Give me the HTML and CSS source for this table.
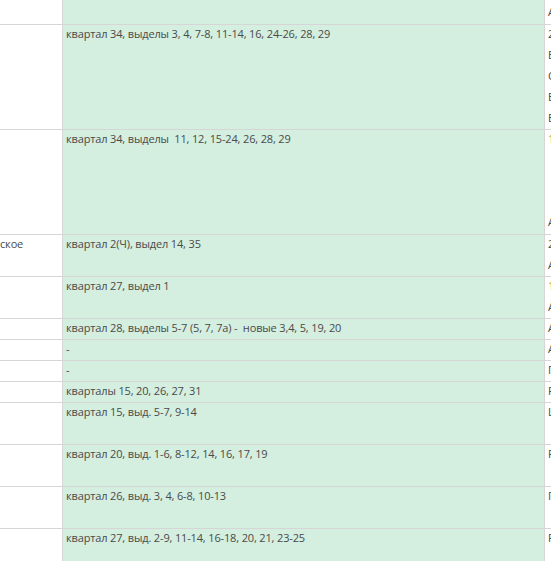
FILE: index.html
```html
<!DOCTYPE html>
<html lang="ru">
<head>
<meta charset="utf-8">
<link rel="stylesheet" href="styles.css">
</head>
<body>
<div class="sheet">
  <div class="row h25">
    <div class="c1"></div>
    <div class="c2"></div>
    <div class="c3 top1">А</div>
  </div>
  <div class="row h105">
    <div class="c1"></div>
    <div class="c2">квартал 34, выделы 3, 4, 7-8, 11-14, 16, 24-26, 28, 29</div>
    <div class="c3"><div class="ln">2</div><div class="ln">Е</div><div class="ln">С</div><div class="ln">Е</div><div class="ln">Е</div></div>
  </div>
  <div class="row h105">
    <div class="c1"></div>
    <div class="c2">квартал 34, выделы &nbsp;11, 12, 15-24, 26, 28, 29</div>
    <div class="c3 split"><div class="ln warn">1</div><div class="ln">А</div></div>
  </div>
  <div class="row h42">
    <div class="c1 clip">ское</div>
    <div class="c2">квартал 2(Ч), выдел 14, 35</div>
    <div class="c3"><div class="ln">2</div><div class="ln">А</div></div>
  </div>
  <div class="row h42">
    <div class="c1"></div>
    <div class="c2">квартал 27, выдел 1</div>
    <div class="c3"><div class="ln warn">1</div><div class="ln">А</div></div>
  </div>
  <div class="row h21">
    <div class="c1"></div>
    <div class="c2">квартал 28, выделы 5-7 (5, 7, 7а) - &nbsp;новые 3,4, 5, 19, 20</div>
    <div class="c3">А</div>
  </div>
  <div class="row h21">
    <div class="c1"></div>
    <div class="c2">-</div>
    <div class="c3">А</div>
  </div>
  <div class="row h21">
    <div class="c1"></div>
    <div class="c2">-</div>
    <div class="c3">П</div>
  </div>
  <div class="row h21">
    <div class="c1"></div>
    <div class="c2">кварталы 15, 20, 26, 27, 31</div>
    <div class="c3">Р</div>
  </div>
  <div class="row h42">
    <div class="c1"></div>
    <div class="c2">квартал 15, выд. 5-7, 9-14</div>
    <div class="c3">Ц</div>
  </div>
  <div class="row h42">
    <div class="c1"></div>
    <div class="c2">квартал 20, выд. 1-6, 8-12, 14, 16, 17, 19</div>
    <div class="c3">Р</div>
  </div>
  <div class="row h42">
    <div class="c1"></div>
    <div class="c2">квартал 26, выд. 3, 4, 6-8, 10-13</div>
    <div class="c3">П</div>
  </div>
  <div class="row h42">
    <div class="c1"></div>
    <div class="c2">квартал 27, выд. 2-9, 11-14, 16-18, 20, 21, 23-25</div>
    <div class="c3">Р</div>
  </div>
</div>
</body>
</html>
```
FILE: styles.css
```css
html, body {
  margin: 0;
  padding: 0;
  background: #ffffff;
  overflow: hidden;
}
.sheet {
  width: 551px;
  height: 561px;
  overflow: hidden;
  font-family: "Open Sans", "Noto Sans", sans-serif;
  font-size: 11px;
  letter-spacing: -0.15px;
  line-height: 18px;
  color: #4a4a4a;
}
.row {
  display: flex;
  box-sizing: border-box;
  border-bottom: 1px solid #d6d6d6;
}
.h21 { height: 21px; }
.h25 { height: 25px; }
.h42 { height: 42px; }
.h105 { height: 105px; }
.c1, .c2, .c3 {
  box-sizing: border-box;
  overflow: hidden;
  white-space: nowrap;
}
.c1 {
  flex: 0 0 63px;
  border-right: 1px solid #d6d6d6;
  padding-left: 3px;
}
.c1.clip { padding-left: 0; }
.c2 {
  flex: 0 0 482px;
  background: #d4eedf;
  border-right: 1px solid #d6d6d6;
  padding-left: 3px;
}
.c3 {
  flex: 1 1 auto;
  padding-left: 3px;
}
.top1 { padding-top: 3px; }
.ln { height: 21px; }
.split {
  display: flex;
  flex-direction: column;
  justify-content: space-between;
}
.warn { color: #c8a04a; }
```
